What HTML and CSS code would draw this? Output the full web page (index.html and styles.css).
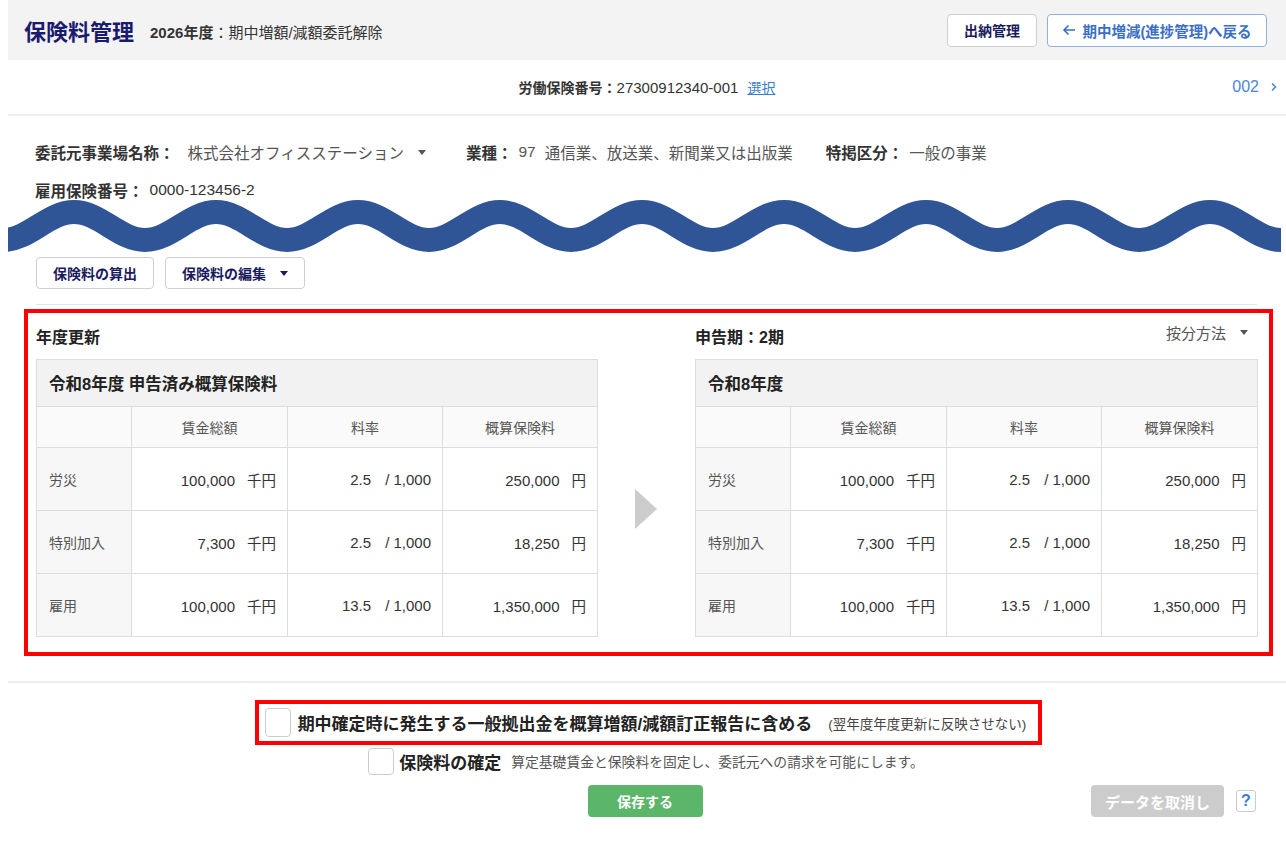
FILE: index.html
```html
<!DOCTYPE html>
<html lang="ja">
<head>
<meta charset="utf-8">
<title>保険料管理</title>
<link rel="stylesheet" href="styles.css">
</head>
<body>
<header class="header">
  <h1 class="title">保険料管理</h1>
  <div class="subtitle"><b>2026年度</b>：期中増額/減額委託解除</div>
  <div class="header-actions">
    <button class="btn">出納管理</button>
    <button class="btn btn-back"><svg class="back-arrow" width="14" height="12" viewBox="0 0 14 12"><path d="M13 6H2M6.5 1.5L2 6l4.5 4.5" fill="none" stroke="currentColor" stroke-width="1.6"/></svg>期中増減(進捗管理)へ戻る</button>
  </div>
</header>

<div class="subbar">
  <div></div>
  <div class="insno"><b>労働保険番号：</b><span class="insno-val">27300912340-001</span><a class="link">選択</a></div>
  <div class="pager">002<svg class="chev" width="8" height="10" viewBox="0 0 8 10"><path d="M2 1.5l3.5 3.5L2 8.5" fill="none" stroke="currentColor" stroke-width="1.6"/></svg></div>
</div>

<section class="info">
  <div class="info-row">
    <div class="field f1"><span class="label">委託元事業場名称：</span><span class="value value-select">株式会社オフィスステーション<span class="caret"></span></span></div>
    <div class="field f2"><span class="label">業種：</span><span class="value">97<span class="gap"></span>通信業、放送業、新聞業又は出版業</span></div>
    <div class="field"><span class="label">特掲区分：</span><span class="value">一般の事業</span></div>
  </div>
  <div class="info-row row2">
    <div class="field"><span class="label">雇用保険番号：</span><span class="value dark">0000-123456-2</span></div>
  </div>
</section>

<svg class="wave" width="1286" height="55" viewBox="0 0 1286 55">
  <path d="M-68 11 C-42.2 11 -22.8 39 3 39 S48.2 11 74 11 S119.2 39 145 39 S190.2 11 216 11 S261.2 39 287 39 S332.2 11 358 11 S403.2 39 429 39 S474.2 11 500 11 S545.2 39 571 39 S616.2 11 642 11 S687.2 39 713 39 S758.2 11 784 11 S829.2 39 855 39 S900.2 11 926 11 S971.2 39 997 39 S1042.2 11 1068 11 S1113.2 39 1139 39 S1184.2 11 1210 11 S1255.2 39 1281 39" fill="none" stroke="#2f5597" stroke-width="24"/>
</svg>

<div class="toolbar">
  <button class="tbtn">保険料の算出</button>
  <button class="tbtn">保険料の編集<span class="caret dark-caret"></span></button>
</div>
<div class="divider"></div>

<section class="panel-box">
  <div class="panel">
    <div class="panel-head"><span>年度更新</span></div>
    <table class="ptable">
      <colgroup><col style="width:95px"><col style="width:156px"><col style="width:155px"><col style="width:155px"></colgroup>
      <tr class="trow-title"><th colspan="4">令和8年度 申告済み概算保険料</th></tr>
      <tr class="trow-head"><td></td><td>賃金総額</td><td>料率</td><td>概算保険料</td></tr>
      <tr class="trow"><td class="rname">労災</td><td>100,000<span class="unit">千円</span></td><td>2.5<span class="unit2">/ 1,000</span></td><td>250,000<span class="unit">円</span></td></tr>
      <tr class="trow"><td class="rname">特別加入</td><td>7,300<span class="unit">千円</span></td><td>2.5<span class="unit2">/ 1,000</span></td><td>18,250<span class="unit">円</span></td></tr>
      <tr class="trow"><td class="rname">雇用</td><td>100,000<span class="unit">千円</span></td><td>13.5<span class="unit2">/ 1,000</span></td><td>1,350,000<span class="unit">円</span></td></tr>
    </table>
  </div>
  <div class="mid"><span class="next-arrow"></span></div>
  <div class="panel">
    <div class="panel-head"><span>申告期：2期</span><span class="method">按分方法<span class="caret"></span></span></div>
    <table class="ptable">
      <colgroup><col style="width:95px"><col style="width:156px"><col style="width:155px"><col style="width:156px"></colgroup>
      <tr class="trow-title"><th colspan="4">令和8年度</th></tr>
      <tr class="trow-head"><td></td><td>賃金総額</td><td>料率</td><td>概算保険料</td></tr>
      <tr class="trow"><td class="rname">労災</td><td>100,000<span class="unit">千円</span></td><td>2.5<span class="unit2">/ 1,000</span></td><td>250,000<span class="unit">円</span></td></tr>
      <tr class="trow"><td class="rname">特別加入</td><td>7,300<span class="unit">千円</span></td><td>2.5<span class="unit2">/ 1,000</span></td><td>18,250<span class="unit">円</span></td></tr>
      <tr class="trow"><td class="rname">雇用</td><td>100,000<span class="unit">千円</span></td><td>13.5<span class="unit2">/ 1,000</span></td><td>1,350,000<span class="unit">円</span></td></tr>
    </table>
  </div>
</section>

<div class="sep2"></div>

<section class="confirm">
  <div class="box2">
    <span class="cb cb-big"></span>
    <span class="cb-text">期中確定時に発生する一般拠出金を概算増額/減額訂正報告に含める</span>
    <span class="cb-note">(翌年度年度更新に反映させない)</span>
  </div>
  <div class="cb-row">
    <span class="cb"></span>
    <span class="cb-text">保険料の確定</span>
    <span class="cb-desc">算定基礎賃金と保険料を固定し、委託元への請求を可能にします。</span>
  </div>
</section>

<div class="actions">
  <div></div>
  <button class="save">保存する</button>
  <div class="right-actions">
    <button class="cancel">データを取消し</button>
    <span class="help">?</span>
  </div>
</div>
</body>
</html>
```

FILE: styles.css
```css
body {
  margin: 0 0 0 8px;
  font-family: "Liberation Sans", "Noto Sans CJK JP", sans-serif;
  color: #333;
  background: #fff;
}

button {
  font-family: inherit;
  cursor: pointer;
  white-space: nowrap;
}

/* header */
.header {
  height: 60px;
  box-sizing: border-box;
  display: flex;
  align-items: center;
  background: #f3f3f3;
  padding: 0 19px 0 16px;
}

.title {
  margin: 0;
  font-size: 22px;
  font-weight: bold;
  color: #1a1a6e;
}

.subtitle {
  margin-left: 16px;
  font-size: 15px;
  color: #333;
  padding-top: 2px;
}

.header-actions {
  margin-left: auto;
  display: flex;
  gap: 10px;
}

.btn {
  height: 33px;
  padding: 0 16px;
  border: 1px solid #cfcfcf;
  border-radius: 4px;
  background: #fff;
  font-size: 14px;
  font-weight: bold;
  color: #1a1a5e;
  display: flex;
  align-items: center;
}

.btn-back {
  width: 220px;
  padding: 0 8px;
  justify-content: center;
  color: #3b6fc6;
  border-color: #8eb0e2;
  font-size: 14.5px;
}

.back-arrow {
  margin-right: 6px;
  flex: none;
}

/* sub bar */
.subbar {
  height: 54px;
  display: grid;
  grid-template-columns: 1fr auto 1fr;
  align-items: center;
  border-bottom: 2px solid #eeeeee;
  font-size: 14px;
}

.insno b {
  color: #333;
}

.insno-val {
  font-size: 15px;
}

.link {
  margin-left: 9px;
  color: #3a7bd5;
  text-decoration: underline;
}

.pager {
  justify-self: end;
  padding-right: 8px;
  color: #4a86d8;
  font-size: 16px;
  display: flex;
  align-items: center;
}

.chev {
  margin-left: 11px;
}

/* info */
.info {
  padding: 25px 0 0 27px;
  font-size: 15.5px;
}

.info-row {
  display: flex;
  align-items: center;
  height: 22px;
}

.row2 {
  margin-top: 16px;
}

.field {
  display: flex;
  align-items: center;
}

.f1 {
  margin-right: 40px;
}

.f2 {
  margin-right: 33px;
}

.label {
  font-weight: bold;
  color: #333;
}

.value {
  margin-left: 6px;
  color: #555;
  display: flex;
  align-items: center;
}

.value-select {
  margin-left: 13px;
}

.value.dark {
  color: #333;
}

.gap {
  display: inline-block;
  width: 9px;
}

.caret {
  display: inline-block;
  width: 0;
  height: 0;
  border-left: 4px solid transparent;
  border-right: 4px solid transparent;
  border-top: 5px solid #555;
  margin-left: 14px;
}

.dark-caret {
  border-top-color: #1a1a5e;
}

/* wave */
.wave {
  display: block;
  margin-left: -8px;
  overflow: visible;
}

/* toolbar */
.toolbar {
  display: flex;
  gap: 11px;
  padding-left: 28px;
  margin-top: 1px;
}

.tbtn {
  height: 32px;
  padding: 0 16px;
  border: 1px solid #cfcfcf;
  border-radius: 4px;
  background: #fff;
  font-size: 14px;
  font-weight: bold;
  color: #1a1a5e;
  display: flex;
  align-items: center;
}

.divider {
  height: 1px;
  background: #e6e6e6;
  margin: 15px 29px 0 28px;
}

/* panels */
.panel-box {
  margin: 4px 13px 0 16px;
  border: 4px solid #ff0000;
  padding: 11px 12px 15px 8px;
  display: grid;
  grid-template-columns: 561px 98px 562px;
}

.panel-head {
  height: 24px;
  display: flex;
  align-items: center;
  justify-content: space-between;
  font-size: 16px;
  font-weight: bold;
  color: #222;
  margin-bottom: 11px;
}

.method {
  font-weight: normal;
  color: #555;
  font-size: 15px;
  display: flex;
  align-items: center;
  margin-top: -8px;
  padding-right: 9px;
}

.method .caret {
  margin-left: 14px;
}

.ptable {
  border-collapse: collapse;
  width: 100%;
  table-layout: fixed;
  font-size: 14px;
  border: 1px solid #d9d9d9;
}

.ptable td,
.ptable th {
  border: 1px solid #dddddd;
  padding: 0;
}

.trow-title th {
  height: 46px;
  background: #f2f2f2;
  text-align: left;
  padding-left: 12px;
  font-size: 16.5px;
  font-weight: bold;
  color: #222;
}

.trow-head td {
  height: 40px;
  background: #fafafa;
  text-align: center;
  color: #555;
}

.trow td {
  height: 62px;
  text-align: right;
  padding-right: 11px;
  color: #333;
  font-size: 15px;
}

.trow td.rname {
  text-align: left;
  padding-left: 12px;
  padding-right: 0;
  background: #f7f7f7;
  color: #555;
  font-size: 14px;
}

.unit {
  margin-left: 12px;
  font-size: 14.5px;
}

.unit2 {
  margin-left: 14px;
}

.mid {
  display: flex;
  align-items: center;
  justify-content: center;
  padding-top: 57px;
}

.next-arrow {
  width: 0;
  height: 0;
  border-top: 20px solid transparent;
  border-bottom: 20px solid transparent;
  border-left: 22px solid #cccccc;
}

.sep2 {
  height: 2px;
  background: #eeeeee;
  margin-top: 25px;
}

/* confirm */
.confirm {
  display: flex;
  flex-direction: column;
  align-items: center;
  margin-top: 17px;
}

.box2 {
  height: 37px;
  border: 4px solid #ff0000;
  padding: 0 12px 0 6px;
  margin-left: 3px;
  display: flex;
  align-items: center;
}

.cb {
  width: 24px;
  height: 25px;
  border: 1px solid #cccccc;
  border-radius: 4px;
  background: #fff;
  flex: none;
}

.cb-big {
  height: 27px;
}

.cb-text {
  margin-left: 7px;
  font-size: 17px;
  font-weight: bold;
  color: #222;
}

.cb-note {
  margin-left: 16px;
  font-size: 13.5px;
  color: #444;
}

.cb-row {
  margin-top: 3px;
  height: 26px;
  display: flex;
  align-items: center;
  padding-right: 2px;
}

.cb-row .cb-text {
  margin-left: 5px;
}

.cb-desc {
  margin-left: 10px;
  font-size: 13.8px;
  color: #555;
}

/* actions */
.actions {
  display: grid;
  grid-template-columns: 1fr auto 1fr;
  align-items: center;
  margin-top: 11px;
  padding-right: 4px;
}

.save {
  width: 115px;
  height: 32px;
  border: none;
  border-radius: 4px;
  background: #5cb66a;
  color: #fff;
  font-size: 14px;
  font-weight: bold;
}

.right-actions {
  justify-self: end;
  margin-right: 26px;
  display: flex;
  align-items: center;
}

.cancel {
  width: 133px;
  height: 32px;
  border: none;
  border-radius: 4px;
  background: #cccccc;
  color: #fff;
  font-size: 15px;
  font-weight: bold;
}

.help {
  margin-left: 12px;
  width: 20px;
  height: 22px;
  box-sizing: border-box;
  border: 1px solid #cccccc;
  border-radius: 3px;
  display: flex;
  align-items: center;
  justify-content: center;
  color: #3a7bd5;
  font-weight: bold;
  font-size: 16px;
}
```
